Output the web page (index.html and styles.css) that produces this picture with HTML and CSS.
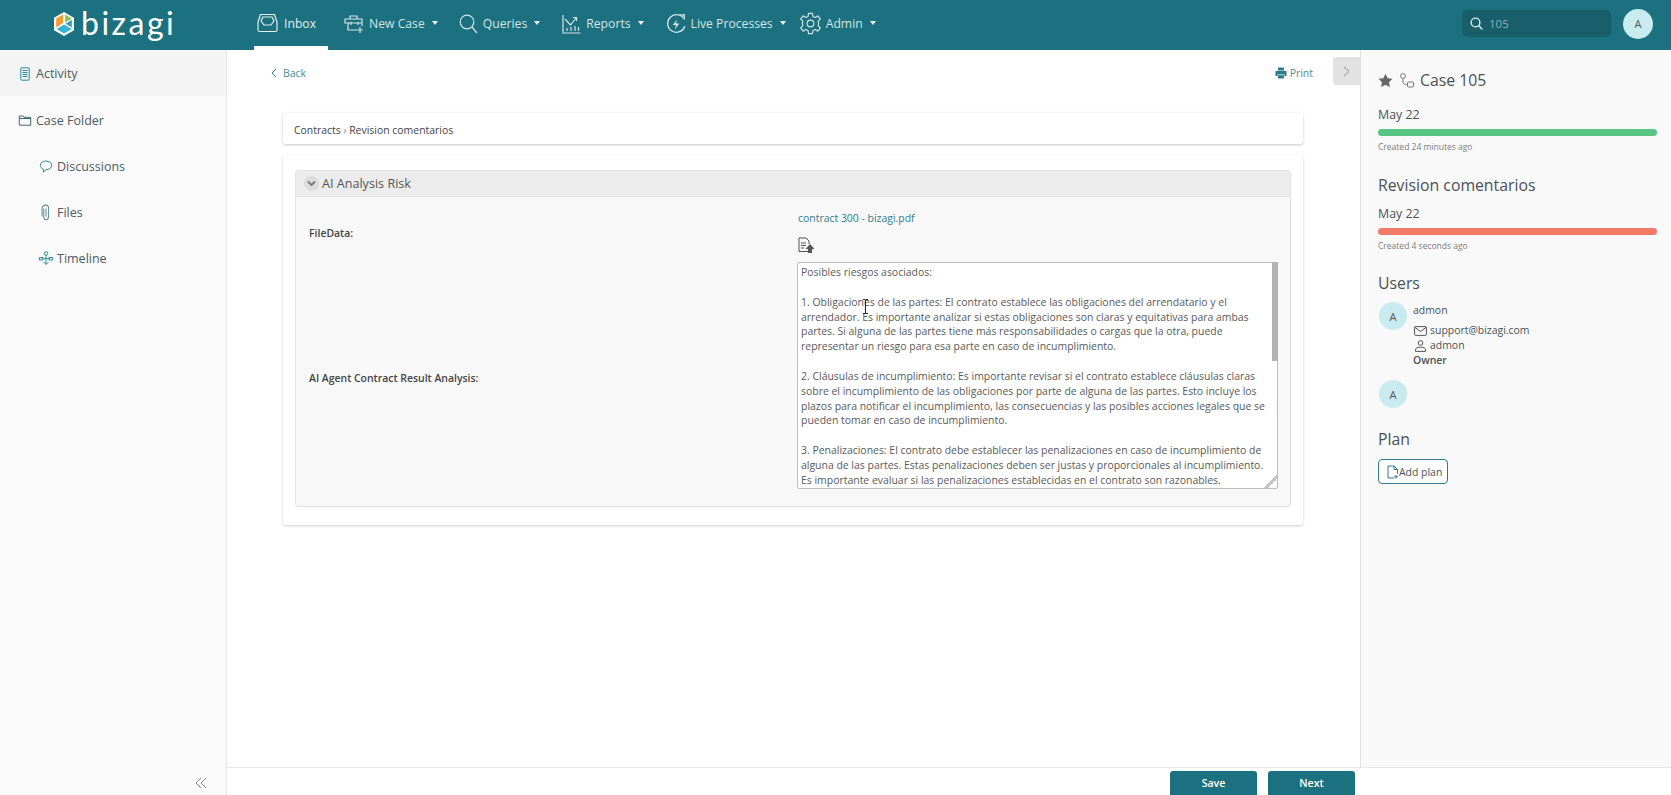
FILE: index.html
```html
<!DOCTYPE html>
<html lang="en">
<head>
    <meta charset="UTF-8">
    <title>Bizagi - Case 105</title>
    <link rel="stylesheet" href="styles.css">
</head>
<body>

    <header class="topbar">
        <a class="logo">
            <svg class="logo-mark" width="22" height="26" viewBox="0 0 22 26">
                <path d="M11 1 L21 6.8 V19.2 L11 25 L1 19.2 V6.8 Z" fill="#fff"/>
                <path d="M12.2 3.6 L18.8 7.4 L12.2 11.6 Z" fill="#8cc152"/>
                <path d="M3.2 7.6 L10 3.6 V12 L3.2 16.4 Z" fill="#f39c32"/>
                <path d="M3.6 18 L11 13.6 L18.8 18 L11 22.6 Z" fill="#35b4d3"/>
                <path d="M12.6 12.8 L18.8 8.8 V16.4 Z" fill="#2b9fbd"/>
            </svg>
            <span class="logo-text">bizagi</span>
        </a>
        <nav class="nav">
            <a class="nav-item nav-inbox">
                <svg width="21" height="20" viewBox="0 0 21 20" fill="none" stroke="currentColor" stroke-width="1.2" stroke-linejoin="round">
                    <path d="M1 9 L3.5 1.5 H17.5 L20 9 V17 Q20 18.5 18.5 18.5 H2.5 Q1 18.5 1 17 Z"/>
                    <path d="M4 8 L6 4 H15 L17 8 L14 12 H7 Z"/>
                </svg>
                <span>Inbox</span>
            </a>
            <a class="nav-item nav-new">
                <svg width="20" height="20" viewBox="0 0 20 20" fill="none" stroke="currentColor" stroke-width="1.2">
                    <path d="M13 16 H4 V9 H1 V5 H18 V12"/>
                    <path d="M6 5 V2 H13 V5 M4 9 H18 M7 8 V11 M14 8 V11"/>
                    <path d="M16 13 V19 M13 16 H19"/>
                </svg>
                <span>New Case</span><i class="caret"></i>
            </a>
            <a class="nav-item nav-queries">
                <svg width="19" height="20" viewBox="0 0 19 20" fill="none" stroke="currentColor" stroke-width="1.2">
                    <circle cx="8" cy="8" r="6.8"/>
                    <path d="M13 13 L18 19"/>
                </svg>
                <span>Queries</span><i class="caret"></i>
            </a>
            <a class="nav-item nav-reports">
                <svg width="19" height="20" viewBox="0 0 19 20" fill="none" stroke="currentColor" stroke-width="1.2">
                    <path d="M1 1 V19 H18.5"/>
                    <path d="M3 5 L8.5 11 L14 4 M11 3.5 H14.5 V7"/>
                    <path d="M5 17 V14 M9 17 V13 M13 17 V12 M16.5 17 V13"/>
                </svg>
                <span>Reports</span><i class="caret"></i>
            </a>
            <a class="nav-item nav-live">
                <svg width="20" height="22" viewBox="0 0 18 20" fill="none" stroke="currentColor" stroke-width="1.2">
                    <path d="M16 5 A8 8 0 1 0 17 12"/>
                    <path d="M12 2 L16.5 1.5 V6"/>
                    <path d="M10 6 L6 11 H9 L8 15 L12 9.5 H9 Z" fill="currentColor" stroke="none"/>
                </svg>
                <span>Live Processes</span><i class="caret"></i>
            </a>
            <a class="nav-item nav-admin">
                <svg width="23" height="23" viewBox="0 0 24 24" fill="none" stroke="currentColor" stroke-width="1.2">
                    <circle cx="12" cy="12" r="3.5"/>
                    <path d="M10 1.5 H14 L14.6 4.6 L17 5.7 L19.7 4 L22.3 7.4 L20 9.5 L20.5 12 L20 14.5 L22.3 16.6 L19.7 20 L17 18.3 L14.6 19.4 L14 22.5 H10 L9.4 19.4 L7 18.3 L4.3 20 L1.7 16.6 L4 14.5 L3.5 12 L4 9.5 L1.7 7.4 L4.3 4 L7 5.7 L9.4 4.6 Z" stroke-linejoin="round"/>
                </svg>
                <span>Admin</span><i class="caret"></i>
            </a>
        </nav>
        <div class="search">
            <svg width="13" height="13" viewBox="0 0 13 13" fill="none" stroke="#dfeef0" stroke-width="1.4">
                <circle cx="5.5" cy="5.5" r="4.4"/>
                <path d="M8.8 8.8 L12.4 12.4"/>
            </svg>
            <span>105</span>
        </div>
        <div class="avatar avatar-top">A</div>
    </header>

    <div class="layout">
        <aside class="sidebar">
            <a class="side-item active">
                <svg width="10" height="14" viewBox="0 0 10 14" fill="none" stroke="#2c8a96" stroke-width="1">
                    <rect x="0.8" y="0.8" width="8.4" height="12.4" rx="1"/>
                    <path d="M2.5 3.5 H7.5 M2.5 5.5 H7.5 M2.5 7.5 H7.5 M2.5 9.5 H7.5"/>
                </svg>
                <span>Activity</span>
            </a>
            <a class="side-item">
                <svg width="13" height="11" viewBox="0 0 13 11" fill="none" stroke="#3f6670" stroke-width="1">
                    <path d="M0.8 9.5 V1 H4.5 L5.5 2.3 H12.2 V10.2 H0.8 Z M0.8 3.5 H12.2"/>
                </svg>
                <span>Case Folder</span>
            </a>
            <a class="side-item sub">
                <svg width="13" height="13" viewBox="0 0 13 13" fill="none" stroke="#2c8a96" stroke-width="1">
                    <path d="M6.5 1 C3 1 0.8 3 0.8 5.3 C0.8 7.2 2 8.5 3.8 9.2 L4 12 L6.6 9.6 C10 9.6 12.2 7.6 12.2 5.3 C12.2 3 10 1 6.5 1 Z"/>
                </svg>
                <span>Discussions</span>
            </a>
            <a class="side-item sub">
                <svg width="13" height="17" viewBox="0 0 13 15" fill="none" stroke="#5f8f98" stroke-width="0.9">
                    <path d="M6.5 4 V11 M4.5 4 V11 C4.5 12.5 5.5 13.8 6.5 13.8 C7.8 13.8 8.8 12.5 8.8 11 V3.5 C8.8 2 7.8 1 6.5 1 C4.5 1 3 2 3 4 V11"/>
                </svg>
                <span>Files</span>
            </a>
            <a class="side-item sub">
                <svg width="14" height="15" viewBox="0 0 14 15" fill="none" stroke="#2c8a96" stroke-width="1">
                    <circle cx="7" cy="2.5" r="1.8"/>
                    <rect x="0.6" y="6.5" width="3.2" height="2.4"/>
                    <rect x="10.2" y="6.5" width="3.2" height="2.4"/>
                    <path d="M7 4.3 V13 M3.8 7.7 H10.2 M4.5 11 L7 13.5 L9.5 11"/>
                </svg>
                <span>Timeline</span>
            </a>
            <svg class="collapse" width="12" height="12" viewBox="0 0 12 12" fill="none" stroke="#8a8a8a" stroke-width="1">
                <path d="M6 1 L1 6 L6 11 M11 1 L6 6 L11 11"/>
            </svg>
        </aside>

        <div class="workspace">
            <div class="work-row">
                <main class="main">
                    <div class="toolbar">
                        <a class="back">
                            <svg width="6" height="10" viewBox="0 0 6 10" fill="none" stroke="#2c7c8a" stroke-width="1"><path d="M5 1 L1 5 L5 9"/></svg>
                            <span>Back</span>
                        </a>
                        <a class="print">
                            <svg width="12" height="12" viewBox="0 0 12 12" fill="#2c7c8a">
                                <path d="M3 0.5 H9 V3.5 H3 Z M0.5 4 H11.5 V9 H9.5 V7.5 H2.5 V9 H0.5 Z"/>
                                <path d="M3 8.2 H9 V11.5 H3 Z"/>
                            </svg>
                            <span>Print</span>
                        </a>
                    </div>
                    <a class="panel-toggle">
                        <svg width="7" height="11" viewBox="0 0 7 11" fill="none" stroke="#8f8f8f" stroke-width="1"><path d="M1 1 L6 5.5 L1 10"/></svg>
                    </a>

                    <div class="crumbs">Contracts <small>&rsaquo;</small> Revision comentarios</div>

                    <section class="form-card">
                        <div class="group">
                            <div class="group-head">
                                <span class="group-toggle">
                                    <svg width="9" height="7" viewBox="0 0 9 7" fill="none" stroke="#777" stroke-width="1.8"><path d="M1 1.5 L4.5 5 L8 1.5"/></svg>
                                </span>
                                <span>AI Analysis Risk</span>
                            </div>
                            <div class="group-body">
                                <div class="field field-file">
                                    <label>FileData:</label>
                                    <div class="file-value">
                                        <a class="file-link">contract 300 - bizagi.pdf</a>
                                        <svg class="file-icon" width="17" height="17" viewBox="0 0 17 17" fill="none" stroke="#555" stroke-width="1">
                                            <path d="M10 14.5 H1 V1 H8 L11 4 V7"/>
                                            <path d="M3 6 H8 M3 8.5 H8 M3 11 H6"/>
                                            <path d="M12 7 L16.5 12 H14 V16 H10 V12 H7.5 Z" fill="#555" stroke="none"/>
                                        </svg>
                                    </div>
                                </div>
                                <div class="field field-result">
                                    <label>AI Agent Contract Result Analysis:</label>
                                    <div class="result-box">
                                        <textarea class="result" readonly>Posibles riesgos asociados:

1. Obligaciones de las partes: El contrato establece las obligaciones del arrendatario y el arrendador. Es importante analizar si estas obligaciones son claras y equitativas para ambas partes. Si alguna de las partes tiene más responsabilidades o cargas que la otra, puede representar un riesgo para esa parte en caso de incumplimiento.

2. Cláusulas de incumplimiento: Es importante revisar si el contrato establece cláusulas claras sobre el incumplimiento de las obligaciones por parte de alguna de las partes. Esto incluye los plazos para notificar el incumplimiento, las consecuencias y las posibles acciones legales que se pueden tomar en caso de incumplimiento.

3. Penalizaciones: El contrato debe establecer las penalizaciones en caso de incumplimiento de alguna de las partes. Estas penalizaciones deben ser justas y proporcionales al incumplimiento. Es importante evaluar si las penalizaciones establecidas en el contrato son razonables.</textarea>
                                        <span class="scroll-thumb"></span>
                                        <svg class="ibeam" width="7" height="15" viewBox="0 0 7 15" fill="none" stroke="#222" stroke-width="1">
                                            <path d="M1 0.5 H3 L3.5 1.2 L4 0.5 H6 M3.5 1 V14 M1 14.5 H3 L3.5 13.8 L4 14.5 H6"/>
                                        </svg>
                                    </div>
                                </div>
                            </div>
                        </div>
                    </section>
                </main>

                <aside class="details">
                    <div class="case-title">
                        <svg width="15" height="15" viewBox="0 0 24 24" fill="#666"><path d="M12 1 L15.4 8.2 L23.2 9.2 L17.5 14.6 L19 22.4 L12 18.6 L5 22.4 L6.5 14.6 L0.8 9.2 L8.6 8.2 Z"/></svg>
                        <svg width="15" height="15" viewBox="0 0 15 15" fill="none" stroke="#777" stroke-width="1">
                            <circle cx="4" cy="3" r="2.4"/>
                            <rect x="8.5" y="9" width="6" height="5" rx="1"/>
                            <path d="M4 5.4 V9 C4 11 5 11.5 8.5 11.5"/>
                        </svg>
                        <span>Case 105</span>
                    </div>
                    <div class="date">May 22</div>
                    <div class="bar bar-green"></div>
                    <div class="created">Created 24 minutes ago</div>

                    <h3 class="section">Revision comentarios</h3>
                    <div class="date date-tight">May 22</div>
                    <div class="bar bar-red"></div>
                    <div class="created">Created 4 seconds ago</div>

                    <h3 class="section section-users">Users</h3>
                    <div class="user">
                        <div class="avatar">A</div>
                        <div class="user-info">
                            <div class="user-name">admon</div>
                            <div class="user-line">
                                <svg width="13" height="10" viewBox="0 0 13 10" fill="none" stroke="#555" stroke-width="1"><rect x="0.6" y="0.6" width="11.8" height="8.8" rx="1"/><path d="M0.8 1.2 L6.5 5.6 L12.2 1.2"/></svg>
                                <span>support@bizagi.com</span>
                            </div>
                            <div class="user-line">
                                <svg width="13" height="12" viewBox="0 0 13 12" fill="none" stroke="#555" stroke-width="1"><circle cx="6.5" cy="3" r="2.3"/><path d="M1.5 11.4 V9.5 C1.5 8 3.5 7.2 6.5 7.2 C9.5 7.2 11.5 8 11.5 9.5 V11.4 Z"/></svg>
                                <span>admon</span>
                            </div>
                            <div class="user-role">Owner</div>
                        </div>
                    </div>
                    <div class="avatar avatar-solo">A</div>

                    <h3 class="section section-plan">Plan</h3>
                    <a class="add-plan">
                        <svg width="12" height="14" viewBox="0 0 12 14" fill="none" stroke="#2c7c8a" stroke-width="1"><path d="M7 13 H1 V1 H7 L10.5 4.5 V9 M7 1 V4.5 H10.5 M9 10 V13.5 M7.2 11.8 H11"/></svg>
                        <span>Add plan</span>
                    </a>
                </aside>
            </div>

            <footer class="actions">
                <button class="btn btn-save">Save</button>
                <button class="btn btn-next">Next</button>
            </footer>
        </div>
    </div>

</body>
</html>
```

FILE: styles.css
```css
* {
    box-sizing: border-box;
}

html, body {
    height: 100%;
}

body {
    margin: 0;
    overflow: hidden;
    font-family: "Open Sans", Arial, sans-serif;
    font-size: 12px;
    color: #444;
    background-color: #fff;
    display: flex;
    flex-direction: column;
}

/* top bar */
.topbar {
    height: 50px;
    flex: none;
    display: flex;
    align-items: center;
    padding-bottom: 3px;
    background-color: #1b717f;
    color: #d4e4e7;
}

.logo {
    display: flex;
    align-items: center;
    width: 254px;
    padding-left: 53px;
    color: #fff;
}

.logo-mark {
    flex: none;
}

.logo-text {
    margin-left: 6px;
    font-family: Lato, sans-serif;
    font-size: 32px;
    line-height: 40px;
    letter-spacing: 2.5px;
    margin-top: -2px;
}

.nav {
    display: flex;
    align-self: flex-start;
    height: 50px;
}

.nav-item {
    display: flex;
    align-items: center;
    padding-bottom: 3px;
    font-size: 12.2px;
}

.nav-item svg {
    margin-right: 5px;
}

.nav-inbox {
    width: 74px;
    padding-bottom: 0;
    padding-left: 3px;
    color: #e3eef0;
    border-bottom: 4px solid #fff;
    margin-right: 16px;
}

.nav-inbox svg {
    margin-right: 6px;
}

.nav-new {
    margin-right: 21px;
}

.nav-queries {
    margin-right: 22px;
}

.nav-reports {
    margin-right: 22px;
}

.nav-live {
    margin-right: 13px;
}

.nav-admin svg {
    margin-right: 4px;
}

.caret {
    width: 0;
    height: 0;
    margin-left: 7px;
    margin-top: -2px;
    border-left: 3.5px solid transparent;
    border-right: 3.5px solid transparent;
    border-top: 4px solid #eef5f6;
}

.search {
    margin-left: auto;
    width: 149px;
    height: 27px;
    display: flex;
    align-items: center;
    gap: 6px;
    padding-left: 8px;
    border-radius: 5px;
    background-color: #185e6b;
    color: #8db0b6;
    font-size: 11.5px;
}

.avatar {
    width: 28px;
    height: 28px;
    flex: none;
    border-radius: 50%;
    background-color: #c8ebef;
    color: #555;
    font-size: 11px;
    display: flex;
    align-items: center;
    justify-content: center;
}

.avatar-top {
    width: 30px;
    height: 30px;
    margin-left: 12px;
    margin-right: 18px;
}

.layout {
    flex: 1;
    min-height: 0;
    display: flex;
}

/* left menu */
.sidebar {
    position: relative;
    width: 227px;
    flex: none;
    background-color: #fafafa;
    border-right: 1px solid #e6e6e6;
}

.side-item {
    height: 46px;
    display: flex;
    align-items: center;
    padding-left: 17px;
    padding-top: 2px;
    font-size: 12.5px;
    color: #4d5a5e;
}

.side-item svg {
    width: 16px;
    margin-right: 3px;
}

.side-item.active {
    padding-top: 1px;
    background-color: #f4f4f4;
}

.side-item.sub {
    padding-left: 38px;
}

.collapse {
    position: absolute;
    right: 19px;
    bottom: 6px;
}

.workspace {
    flex: 1;
    min-width: 0;
    display: flex;
    flex-direction: column;
}

.work-row {
    flex: 1;
    min-height: 0;
    display: flex;
}

/* center */
.main {
    position: relative;
    flex: 1;
    min-width: 0;
    padding: 0 57px 0 56px;
}

.toolbar {
    display: flex;
    justify-content: space-between;
    align-items: center;
    height: 44px;
    margin: 0 -10px 0 -12px;
    padding-top: 1px;
    font-size: 10.45px;
    color: #4c8b96;
}

.back, .print {
    display: flex;
    align-items: center;
    gap: 6px;
}

.print {
    gap: 3px;
}

.panel-toggle {
    position: absolute;
    top: 7px;
    right: 0;
    width: 27px;
    height: 28px;
    display: flex;
    align-items: center;
    justify-content: center;
    background-color: #e2e2e2;
    border-radius: 3px 0 0 3px;
}

.crumbs {
    margin-top: 19px;
    height: 31px;
    line-height: 35px;
    padding-left: 11px;
    font-size: 10.45px;
    color: #444;
    background-color: #fff;
    border-radius: 3px;
    box-shadow: 0 1px 3px rgba(0, 0, 0, 0.22);
}

.crumbs small {
    font-size: 10px;
    color: #888;
}

.form-card {
    margin-top: 11px;
    height: 370px;
    padding: 15px 12px 0 12px;
    border-radius: 3px;
    box-shadow: 0 1px 3px rgba(0, 0, 0, 0.2);
}

.group {
    height: 337px;
    border: 1px solid #e3e3e3;
    border-radius: 3px;
    background-color: #f8f8f8;
}

.group-head {
    height: 26px;
    display: flex;
    align-items: center;
    padding-left: 8px;
    gap: 3px;
    background-color: #ececec;
    border-bottom: 1px solid #e0e0e0;
    font-size: 12.6px;
    color: #555;
}

.group-toggle {
    width: 15px;
    height: 15px;
    border-radius: 50%;
    background-color: #dcdcdc;
    display: flex;
    align-items: center;
    justify-content: center;
}

.group-body {
    padding-left: 13px;
}

.field {
    display: flex;
    align-items: center;
}

.field label {
    width: 488px;
    flex: none;
    font-size: 10.45px;
    font-weight: 600;
    color: #444;
}

.field-file {
    height: 65px;
}

.field-file label {
    padding-top: 6px;
}

.file-value {
    display: flex;
    flex-direction: column;
    align-items: flex-start;
    padding-top: 5px;
}

.file-link {
    margin-left: 1px;
    font-size: 10.45px;
    color: #2f7f8c;
}

.file-icon {
    margin-top: 12px;
    margin-left: 1px;
}

.field-result label {
    padding-top: 5px;
}

.result-box {
    position: relative;
    display: flex;
}

.result {
    display: block;
    width: 481px;
    height: 227px;
    padding: 2px 8px 0 3px;
    border: 1px solid #bdbdbd;
    border-radius: 2px;
    font-family: "Open Sans", Arial, sans-serif;
    font-size: 10.45px;
    line-height: 14.85px;
    color: #5a5a5a;
    background-color: #fff;
    outline: none;
    overflow: hidden;
}

.result::-webkit-resizer {
    background: linear-gradient(135deg, transparent 55%, #c4c4c4 55%, #c4c4c4 70%, transparent 70%);
}

.scroll-thumb {
    position: absolute;
    top: 0;
    right: 0;
    width: 6px;
    height: 99px;
    background-color: #b4b4b4;
}

.ibeam {
    position: absolute;
    left: 65px;
    top: 37px;
}

/* right panel */
.details {
    width: 311px;
    flex: none;
    padding: 20px 14px 0 17px;
    background-color: #f9f9f9;
    border-left: 1px solid #e0e0e0;
    color: #4a5257;
}

.case-title {
    display: flex;
    align-items: center;
    gap: 6px;
    height: 20px;
    font-size: 15.8px;
}

.date {
    margin-top: 16px;
    font-size: 12.4px;
    line-height: 18px;
}

.date-tight {
    margin-top: 9px;
}

.bar {
    height: 7px;
    margin-top: 5px;
    border-radius: 4px;
}

.bar-green {
    background-color: #58c585;
}

.bar-red {
    background-color: #f47a68;
}

.created {
    margin-top: 4px;
    font-size: 8.5px;
    line-height: 13px;
    color: #7d7d7d;
}

.section {
    margin: 0;
    font-size: 15.8px;
    font-weight: 400;
    line-height: 22px;
}

.details > .created + .section {
    margin-top: 21px;
}

.details > .created + .section-users {
    margin-top: 20px;
}

.user {
    display: flex;
    gap: 6px;
    margin-top: 8px;
}

.user .avatar {
    margin-left: 1px;
}

.user-name {
    font-size: 10.45px;
    line-height: 15px;
    margin-top: 1px;
    margin-bottom: 5px;
}

.user-line {
    display: flex;
    align-items: center;
    gap: 3px;
    font-size: 10.45px;
    line-height: 15px;
}

.user-line svg {
    margin-left: 1px;
}

.user-role {
    font-size: 10.45px;
    font-weight: 600;
    line-height: 15px;
}

.avatar-solo {
    margin: 12px 0 0 1px;
}

.section-plan {
    margin-top: 20px;
}

.add-plan {
    display: inline-flex;
    align-items: center;
    width: 70px;
    height: 25px;
    margin-top: 9px;
    padding-left: 8px;
    font-size: 10.45px;
    border: 1px solid #2c7c8a;
    border-radius: 4px;
    background-color: #fff;
}

/* footer */
.actions {
    flex: none;
    height: 28px;
    display: flex;
    align-items: flex-start;
    gap: 11px;
    padding: 3px 0 0 943px;
    border-top: 1px solid #e6e6e6;
    overflow: hidden;
}

.btn {
    width: 87px;
    height: 30px;
    padding: 0 0 6px 0;
    border: none;
    border-radius: 3px;
    background-color: #1b717f;
    color: white;
    font-family: "Open Sans", Arial, sans-serif;
    font-size: 10.6px;
    font-weight: 600;
    cursor: pointer;
}
```
